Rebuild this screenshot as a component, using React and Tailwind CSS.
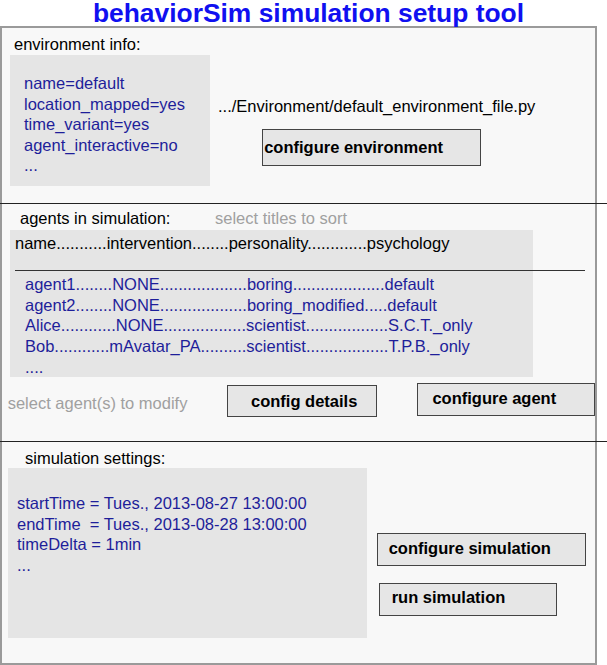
const blue = "text-[#1e1e9a]";

function Btn({ label, className }) {
  return (
    <div className={`border border-[#444] bg-[#e6e6e6] font-bold text-black leading-[20px] ${className}`}>
      {label}
    </div>
  );
}

function Divider() {
  return <div className="w-[607px] h-[1px] bg-[#222] -ml-[2px] shrink-0" />;
}

export default function App() {
  const envLines = [
    "name=default",
    "location_mapped=yes",
    "time_variant=yes",
    "agent_interactive=no",
    "...",
  ];

  const agents = [
    "agent1........NONE...................boring....................default",
    "agent2........NONE...................boring_modified.....default",
    "Alice............NONE..................scientist..................S.C.T._only",
    "Bob............mAvatar_PA..........scientist..................T.P.B._only",
    "....",
  ];

  const simLines = [
    "startTime = Tues., 2013-08-27 13:00:00",
    "endTime\u00a0 = Tues., 2013-08-28 13:00:00",
    "timeDelta = 1min",
    "...",
  ];

  return (
    <div className="w-[607px] h-[665px] bg-white overflow-hidden font-['Liberation_Sans',Arial,sans-serif] text-[16.5px] text-black">

      {/* TITLE */}
      <h1 className="h-[26px] pl-[10px] text-center text-[26.4px] leading-[26px] font-bold text-[#1010f0] whitespace-nowrap">
        behaviorSim simulation setup tool
      </h1>

      {/* MAIN BOX */}
      <div className="w-[597px] h-[639px] border-2 border-[#9a9a9a] bg-[#f8f8f8] flex flex-col">

        {/* ENVIRONMENT */}
        <div className="h-[175px] flex shrink-0">
          <div className="ml-[8px]">
            <div className="ml-[4px] mt-[6px] leading-[20px]">environment info:</div>
            <div className={`mt-[1px] w-[200px] h-[131px] bg-[#e5e5e5] pl-[14px] pt-[18px] leading-[20.5px] ${blue}`}>
              {envLines.map((l) => (
                <div key={l}>{l}</div>
              ))}
            </div>
          </div>
          <div className="ml-[8px] pt-[67.5px]">
            <div className="leading-[20.5px] whitespace-nowrap">.../Environment/default_environment_file.py</div>
            <Btn
              label="configure environment"
              className="mt-[13.3px] ml-[43.7px] w-[219px] h-[36.4px] pl-[1.5px] pt-[6.7px] border-[#333]"
            />
          </div>
        </div>

        <Divider />

        {/* AGENTS */}
        <div className="h-[237px] flex flex-col shrink-0">
          <div className="flex mt-[3.8px] leading-[20px]">
            <div className="w-[213px] pl-[18px]">agents in simulation:</div>
            <div className="text-[#a0a0a0]">select titles to sort</div>
          </div>
          <div className="ml-[8px] mt-[2.2px] w-[523px] h-[147px] bg-[#e5e5e5] pl-[5px] pt-[2.6px]">
            <div className="leading-[20px] whitespace-nowrap">
              name...........intervention........personality.............psychology
            </div>
            <div className="mt-[17.4px] w-[570px] h-[1px] bg-[#333]" />
            <div className={`mt-[3.3px] pl-[10px] leading-[20.6px] whitespace-nowrap ${blue}`}>
              {agents.map((a) => (
                <div key={a}>{a}</div>
              ))}
            </div>
          </div>
          <div className="flex items-start">
            <div className="w-[225px] pl-[5.7px] mt-[15.6px] leading-[20px] text-[#a0a0a0] whitespace-nowrap">
              select agent(s) to modify
            </div>
            <Btn label="config details" className="mt-[8px] w-[150px] h-[32.3px] pl-[23px] pt-[5px]" />
            <Btn label="configure agent" className="mt-[6.3px] ml-[39.6px] w-[178.4px] h-[32.7px] pl-[14.8px] pt-[3.3px]" />
          </div>
        </div>

        <Divider />

        {/* SIMULATION */}
        <div className="flex flex-1">
          <div className="ml-[5.7px]">
            <div className="pl-[17.3px] mt-[5.5px] leading-[20px]">simulation settings:</div>
            <div className={`mt-[0.5px] w-[359px] h-[170px] bg-[#e5e5e5] pl-[9.3px] pt-[25px] leading-[20.7px] whitespace-nowrap ${blue}`}>
              {simLines.map((l) => (
                <div key={l}>{l}</div>
              ))}
            </div>
          </div>
          <div className="ml-[10.5px]">
            <Btn label="configure simulation" className="mt-[91.3px] w-[208.5px] h-[32.7px] pl-[10.5px] pt-[4px]" />
            <Btn label="run simulation" className="mt-[17.3px] ml-[1.9px] w-[178px] h-[32.7px] pl-[11.6px] pt-[3px]" />
          </div>
        </div>

      </div>
    </div>
  );
}
